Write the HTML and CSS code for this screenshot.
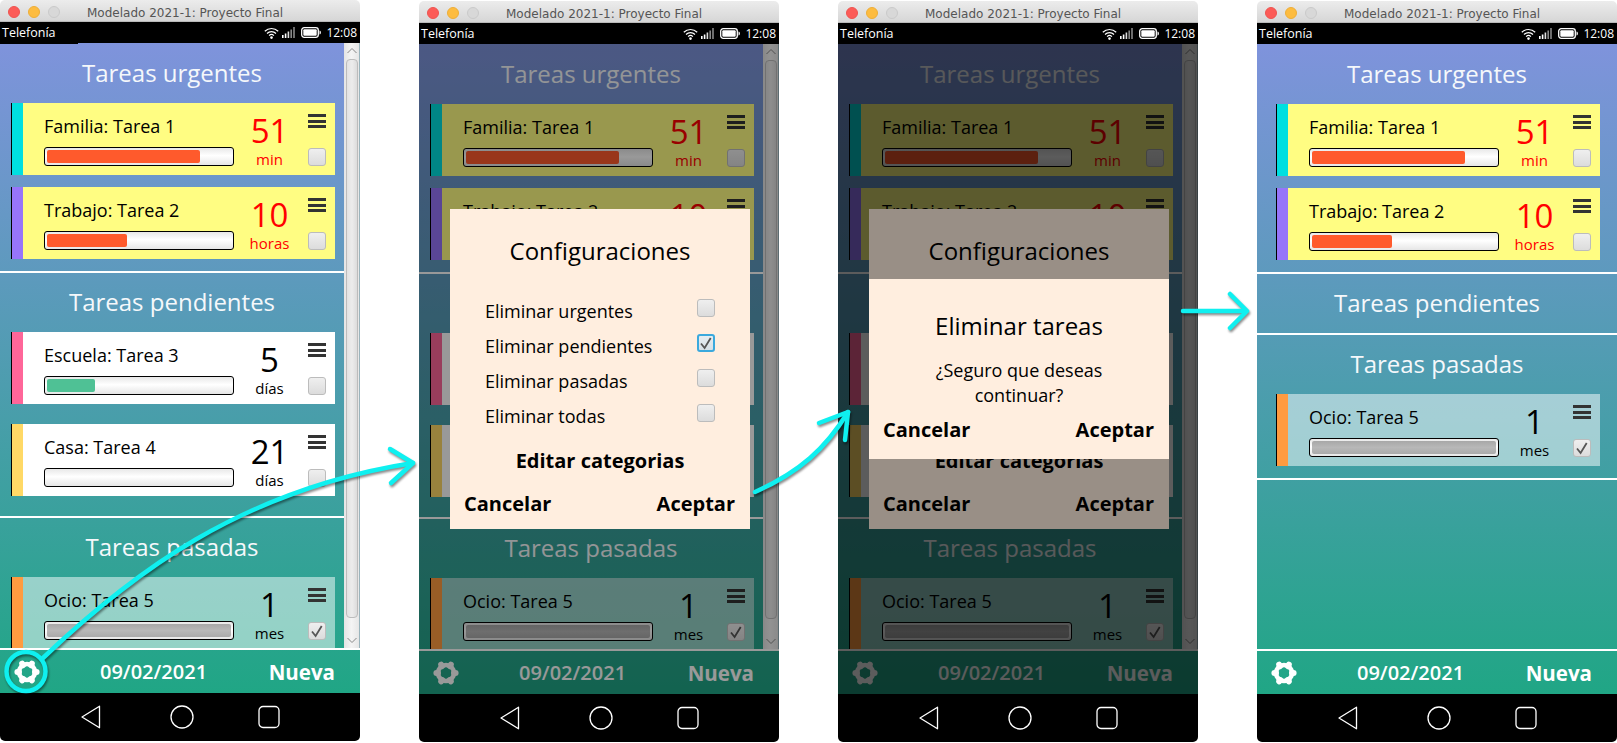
FILE: index.html
```html
<!DOCTYPE html>
<html lang="es">
<head>
<meta charset="utf-8">
<title>Modelado 2021-1: Proyecto Final</title>
<link rel="stylesheet" href="styles.css">
</head>
<body>
<svg class="defs" xmlns="http://www.w3.org/2000/svg">
  <symbol id="gear" viewBox="0 0 26 26">
    <circle cx="13" cy="13" r="8" fill="none" stroke="currentColor" stroke-width="4.5"/>
    <g stroke="currentColor" stroke-width="6" stroke-linecap="round">
      <path d="M21 13H22.600M17 6.070L17.800 4.690M9 6.070L8.200 4.690M5 13H3.400M9 19.930L8.200 21.310M17 19.930L17.800 21.310"/>
    </g>
  </symbol>
  <symbol id="wifi" viewBox="0 0 15 12">
    <g fill="none" stroke="#fff" stroke-width="1.2">
      <path d="M.8 4.2a9.6 9.6 0 0 1 13.4 0"/>
      <path d="M3 6.5a6.4 6.4 0 0 1 9 0"/>
      <path d="M5.1 8.6a3.4 3.4 0 0 1 4.8 0"/>
    </g>
    <circle cx="7.5" cy="10.6" r="1.3" fill="#fff"/>
  </symbol>
  <symbol id="signal" viewBox="0 0 13 11">
    <path fill="#fff" d="M0 8h1.6v3H0zM2.8 6.5h1.6V11H2.8z"/>
    <path fill="#ddd" d="M5.6 4.5h1.6V11H5.6z"/>
    <path fill="#888" d="M8.4 2.500H10V11H8.4zM11.2 0h1.6v11h-1.6z"/>
  </symbol>
  <symbol id="battery" viewBox="0 0 20 11">
    <rect x=".7" y=".7" width="16.6" height="9.6" rx="2.5" fill="none" stroke="#fff" stroke-width="1.3"/>
    <rect x="2.3" y="2.3" width="13.4" height="6.4" rx="1" fill="#fff"/>
    <path d="M18.5 3.500c1 .3 1.4 1 1.4 2s-.4 1.7-1.4 2z" fill="#fff"/>
  </symbol>
  <symbol id="tick" viewBox="0 0 18 18">
    <path d="M4 9.500l3.600 4.500L13.700 4" fill="none" stroke="#555" stroke-width="1.8"/>
  </symbol>
</svg>

<main class="desk">

  <section class="phone phone-first">
    <header class="titlebar"><span class="light light-red"></span><span class="light light-yellow"></span><span class="light light-gray"></span><span class="wintitle">Modelado 2021-1: Proyecto Final</span></header>
    <div class="status"><span class="carrier carrier-tab">Telefonía</span><svg class="ic-wifi"><use href="#wifi"/></svg><svg class="ic-signal"><use href="#signal"/></svg><svg class="ic-battery"><use href="#battery"/></svg><span class="clock">12:08</span></div>
    <div class="app">
      <div class="scroller">
        <div class="content">
          <div class="group group-urgent">
            <h2 class="group-title group-title-first">Tareas urgentes</h2>
            <div class="card card-urgent"><span class="stripe stripe-cyan"></span><div class="info"><div class="name">Familia: Tarea 1</div><div class="bar"><span class="fill fill-red" style="width:83%"></span></div></div><div class="count count-red"><div class="num">51</div><div class="unit">min</div></div><div class="actions"><span class="menu"><i></i><i></i><i></i></span><span class="check"></span></div></div>
            <div class="card card-urgent"><span class="stripe stripe-violet"></span><div class="info"><div class="name">Trabajo: Tarea 2</div><div class="bar"><span class="fill fill-red" style="width:43.5%"></span></div></div><div class="count count-red"><div class="num">10</div><div class="unit">horas</div></div><div class="actions"><span class="menu"><i></i><i></i><i></i></span><span class="check"></span></div></div>
          </div>
          <div class="group group-pending">
            <h2 class="group-title">Tareas pendientes</h2>
            <div class="card"><span class="stripe stripe-pink"></span><div class="info"><div class="name">Escuela: Tarea 3</div><div class="bar"><span class="fill fill-green" style="width:26%"></span></div></div><div class="count"><div class="num">5</div><div class="unit">días</div></div><div class="actions"><span class="menu"><i></i><i></i><i></i></span><span class="check"></span></div></div>
            <div class="card"><span class="stripe stripe-gold"></span><div class="info"><div class="name">Casa: Tarea 4</div><div class="bar"></div></div><div class="count"><div class="num">21</div><div class="unit">días</div></div><div class="actions"><span class="menu"><i></i><i></i><i></i></span><span class="check"></span></div></div>
          </div>
          <div class="group group-past">
            <h2 class="group-title">Tareas pasadas</h2>
            <div class="card card-done"><span class="stripe stripe-orange"></span><div class="info"><div class="name">Ocio: Tarea 5</div><div class="bar"><span class="fill fill-gray" style="width:100%"></span></div></div><div class="count"><div class="num">1</div><div class="unit">mes</div></div><div class="actions"><span class="menu"><i></i><i></i><i></i></span><span class="check"><svg class="tick"><use href="#tick"/></svg></span></div></div>
          </div>
        </div>
        <div class="scrollbar"><svg class="chev" viewBox="0 0 16 16"><path d="M3.5 10L8 5.5l4.5 4.5"/></svg><span class="thumb"></span><svg class="chev chev-end" viewBox="0 0 16 16"><path d="M3.5 6L8 10.5 12.5 6"/></svg></div>
      </div>
      <footer class="toolbar"><svg class="gear"><use href="#gear"/></svg><span class="date">09/02/2021</span><span class="new">Nueva</span></footer>
    </div>
    <nav class="navbar"><svg class="nav-back" viewBox="0 0 20 24"><path d="M1 12L18.5 1.2v21.6z"/></svg><svg class="nav-home" viewBox="0 0 24 24"><circle cx="12" cy="12" r="11"/></svg><svg class="nav-recent" viewBox="0 0 22 24"><rect x="1" y="1.5" width="20" height="21" rx="4"/></svg></nav>
  </section>

  <section class="phone">
    <header class="titlebar"><span class="light light-red"></span><span class="light light-yellow"></span><span class="light light-gray"></span><span class="wintitle">Modelado 2021-1: Proyecto Final</span></header>
    <div class="status"><span class="carrier">Telefonía</span><svg class="ic-wifi"><use href="#wifi"/></svg><svg class="ic-signal"><use href="#signal"/></svg><svg class="ic-battery"><use href="#battery"/></svg><span class="clock">12:08</span></div>
    <div class="app">
      <div class="scroller">
        <div class="content">
          <div class="group group-urgent">
            <h2 class="group-title group-title-first">Tareas urgentes</h2>
            <div class="card card-urgent"><span class="stripe stripe-cyan"></span><div class="info"><div class="name">Familia: Tarea 1</div><div class="bar"><span class="fill fill-red" style="width:83%"></span></div></div><div class="count count-red"><div class="num">51</div><div class="unit">min</div></div><div class="actions"><span class="menu"><i></i><i></i><i></i></span><span class="check"></span></div></div>
            <div class="card card-urgent"><span class="stripe stripe-violet"></span><div class="info"><div class="name">Trabajo: Tarea 2</div><div class="bar"><span class="fill fill-red" style="width:43.5%"></span></div></div><div class="count count-red"><div class="num">10</div><div class="unit">horas</div></div><div class="actions"><span class="menu"><i></i><i></i><i></i></span><span class="check"></span></div></div>
          </div>
          <div class="group group-pending">
            <h2 class="group-title">Tareas pendientes</h2>
            <div class="card"><span class="stripe stripe-pink"></span><div class="info"><div class="name">Escuela: Tarea 3</div><div class="bar"><span class="fill fill-green" style="width:26%"></span></div></div><div class="count"><div class="num">5</div><div class="unit">días</div></div><div class="actions"><span class="menu"><i></i><i></i><i></i></span><span class="check"></span></div></div>
            <div class="card"><span class="stripe stripe-gold"></span><div class="info"><div class="name">Casa: Tarea 4</div><div class="bar"></div></div><div class="count"><div class="num">21</div><div class="unit">días</div></div><div class="actions"><span class="menu"><i></i><i></i><i></i></span><span class="check"></span></div></div>
          </div>
          <div class="group group-past">
            <h2 class="group-title">Tareas pasadas</h2>
            <div class="card card-done"><span class="stripe stripe-orange"></span><div class="info"><div class="name">Ocio: Tarea 5</div><div class="bar"><span class="fill fill-gray" style="width:100%"></span></div></div><div class="count"><div class="num">1</div><div class="unit">mes</div></div><div class="actions"><span class="menu"><i></i><i></i><i></i></span><span class="check"><svg class="tick"><use href="#tick"/></svg></span></div></div>
          </div>
        </div>
        <div class="scrollbar"><svg class="chev" viewBox="0 0 16 16"><path d="M3.5 10L8 5.5l4.5 4.5"/></svg><span class="thumb"></span><svg class="chev chev-end" viewBox="0 0 16 16"><path d="M3.5 6L8 10.5 12.5 6"/></svg></div>
      </div>
      <footer class="toolbar"><svg class="gear"><use href="#gear"/></svg><span class="date">09/02/2021</span><span class="new">Nueva</span></footer>
      <div class="overlay">
        <div class="dialog">
          <h3 class="dialog-title">Configuraciones</h3>
          <div class="option"><span class="option-label">Eliminar urgentes</span><span class="check"></span></div>
          <div class="option"><span class="option-label">Eliminar pendientes</span><span class="check check-focus"><svg class="tick"><use href="#tick"/></svg></span></div>
          <div class="option"><span class="option-label">Eliminar pasadas</span><span class="check"></span></div>
          <div class="option"><span class="option-label">Eliminar todas</span><span class="check"></span></div>
          <div class="dialog-link">Editar categorias</div>
          <div class="dialog-buttons"><span>Cancelar</span><span>Aceptar</span></div>
        </div>
      </div>
    </div>
    <nav class="navbar"><svg class="nav-back" viewBox="0 0 20 24"><path d="M1 12L18.5 1.2v21.6z"/></svg><svg class="nav-home" viewBox="0 0 24 24"><circle cx="12" cy="12" r="11"/></svg><svg class="nav-recent" viewBox="0 0 22 24"><rect x="1" y="1.5" width="20" height="21" rx="4"/></svg></nav>
  </section>

  <section class="phone">
    <header class="titlebar"><span class="light light-red"></span><span class="light light-yellow"></span><span class="light light-gray"></span><span class="wintitle">Modelado 2021-1: Proyecto Final</span></header>
    <div class="status"><span class="carrier">Telefonía</span><svg class="ic-wifi"><use href="#wifi"/></svg><svg class="ic-signal"><use href="#signal"/></svg><svg class="ic-battery"><use href="#battery"/></svg><span class="clock">12:08</span></div>
    <div class="app">
      <div class="scroller">
        <div class="content">
          <div class="group group-urgent">
            <h2 class="group-title group-title-first">Tareas urgentes</h2>
            <div class="card card-urgent"><span class="stripe stripe-cyan"></span><div class="info"><div class="name">Familia: Tarea 1</div><div class="bar"><span class="fill fill-red" style="width:83%"></span></div></div><div class="count count-red"><div class="num">51</div><div class="unit">min</div></div><div class="actions"><span class="menu"><i></i><i></i><i></i></span><span class="check"></span></div></div>
            <div class="card card-urgent"><span class="stripe stripe-violet"></span><div class="info"><div class="name">Trabajo: Tarea 2</div><div class="bar"><span class="fill fill-red" style="width:43.5%"></span></div></div><div class="count count-red"><div class="num">10</div><div class="unit">horas</div></div><div class="actions"><span class="menu"><i></i><i></i><i></i></span><span class="check"></span></div></div>
          </div>
          <div class="group group-pending">
            <h2 class="group-title">Tareas pendientes</h2>
            <div class="card"><span class="stripe stripe-pink"></span><div class="info"><div class="name">Escuela: Tarea 3</div><div class="bar"><span class="fill fill-green" style="width:26%"></span></div></div><div class="count"><div class="num">5</div><div class="unit">días</div></div><div class="actions"><span class="menu"><i></i><i></i><i></i></span><span class="check"></span></div></div>
            <div class="card"><span class="stripe stripe-gold"></span><div class="info"><div class="name">Casa: Tarea 4</div><div class="bar"></div></div><div class="count"><div class="num">21</div><div class="unit">días</div></div><div class="actions"><span class="menu"><i></i><i></i><i></i></span><span class="check"></span></div></div>
          </div>
          <div class="group group-past">
            <h2 class="group-title">Tareas pasadas</h2>
            <div class="card card-done"><span class="stripe stripe-orange"></span><div class="info"><div class="name">Ocio: Tarea 5</div><div class="bar"><span class="fill fill-gray" style="width:100%"></span></div></div><div class="count"><div class="num">1</div><div class="unit">mes</div></div><div class="actions"><span class="menu"><i></i><i></i><i></i></span><span class="check"><svg class="tick"><use href="#tick"/></svg></span></div></div>
          </div>
        </div>
        <div class="scrollbar"><svg class="chev" viewBox="0 0 16 16"><path d="M3.5 10L8 5.5l4.5 4.5"/></svg><span class="thumb"></span><svg class="chev chev-end" viewBox="0 0 16 16"><path d="M3.5 6L8 10.5 12.5 6"/></svg></div>
      </div>
      <footer class="toolbar"><svg class="gear"><use href="#gear"/></svg><span class="date">09/02/2021</span><span class="new">Nueva</span></footer>
      <div class="overlay">
        <div class="dialog">
          <h3 class="dialog-title">Configuraciones</h3>
          <div class="option"><span class="option-label">Eliminar urgentes</span><span class="check"></span></div>
          <div class="option"><span class="option-label">Eliminar pendientes</span><span class="check check-focus"><svg class="tick"><use href="#tick"/></svg></span></div>
          <div class="option"><span class="option-label">Eliminar pasadas</span><span class="check"></span></div>
          <div class="option"><span class="option-label">Eliminar todas</span><span class="check"></span></div>
          <div class="dialog-link">Editar categorias</div>
          <div class="dialog-buttons"><span>Cancelar</span><span>Aceptar</span></div>
        </div>
        <div class="overlay">
          <div class="dialog dialog-confirm">
            <h3 class="dialog-title">Eliminar tareas</h3>
            <p class="confirm-text">¿Seguro que deseas<br>continuar?</p>
            <div class="dialog-buttons confirm-buttons"><span>Cancelar</span><span>Aceptar</span></div>
          </div>
        </div>
      </div>
    </div>
    <nav class="navbar"><svg class="nav-back" viewBox="0 0 20 24"><path d="M1 12L18.5 1.2v21.6z"/></svg><svg class="nav-home" viewBox="0 0 24 24"><circle cx="12" cy="12" r="11"/></svg><svg class="nav-recent" viewBox="0 0 22 24"><rect x="1" y="1.5" width="20" height="21" rx="4"/></svg></nav>
  </section>

  <section class="phone phone-final">
    <header class="titlebar"><span class="light light-red"></span><span class="light light-yellow"></span><span class="light light-gray"></span><span class="wintitle">Modelado 2021-1: Proyecto Final</span></header>
    <div class="status"><span class="carrier">Telefonía</span><svg class="ic-wifi"><use href="#wifi"/></svg><svg class="ic-signal"><use href="#signal"/></svg><svg class="ic-battery"><use href="#battery"/></svg><span class="clock">12:08</span></div>
    <div class="app">
      <div class="scroller">
        <div class="content">
          <div class="group group-urgent">
            <h2 class="group-title group-title-first">Tareas urgentes</h2>
            <div class="card card-urgent"><span class="stripe stripe-cyan"></span><div class="info"><div class="name">Familia: Tarea 1</div><div class="bar"><span class="fill fill-red" style="width:83%"></span></div></div><div class="count count-red"><div class="num">51</div><div class="unit">min</div></div><div class="actions"><span class="menu"><i></i><i></i><i></i></span><span class="check"></span></div></div>
            <div class="card card-urgent"><span class="stripe stripe-violet"></span><div class="info"><div class="name">Trabajo: Tarea 2</div><div class="bar"><span class="fill fill-red" style="width:43.5%"></span></div></div><div class="count count-red"><div class="num">10</div><div class="unit">horas</div></div><div class="actions"><span class="menu"><i></i><i></i><i></i></span><span class="check"></span></div></div>
          </div>
          <div class="group group-collapsed">
            <h2 class="group-title">Tareas pendientes</h2>
          </div>
          <div class="group group-past">
            <h2 class="group-title">Tareas pasadas</h2>
            <div class="card card-done"><span class="stripe stripe-orange"></span><div class="info"><div class="name">Ocio: Tarea 5</div><div class="bar"><span class="fill fill-gray" style="width:100%"></span></div></div><div class="count"><div class="num">1</div><div class="unit">mes</div></div><div class="actions"><span class="menu"><i></i><i></i><i></i></span><span class="check"><svg class="tick"><use href="#tick"/></svg></span></div></div>
          </div>
        </div>
      </div>
      <footer class="toolbar"><svg class="gear"><use href="#gear"/></svg><span class="date">09/02/2021</span><span class="new">Nueva</span></footer>
    </div>
    <nav class="navbar"><svg class="nav-back" viewBox="0 0 20 24"><path d="M1 12L18.5 1.2v21.6z"/></svg><svg class="nav-home" viewBox="0 0 24 24"><circle cx="12" cy="12" r="11"/></svg><svg class="nav-recent" viewBox="0 0 22 24"><rect x="1" y="1.5" width="20" height="21" rx="4"/></svg></nav>
  </section>

</main>

<svg class="arrows" viewBox="0 0 1617 743" xmlns="http://www.w3.org/2000/svg">
  <g fill="none" stroke="#0ff0f0" stroke-width="4.5" stroke-linecap="round" stroke-linejoin="round">
    <circle cx="26" cy="671.5" r="19.5"/>
    <path d="M43 658C130 575 240 490 413 463"/>
    <path d="M390 449L413 463L391 483"/>
    <path d="M755 492C800 472 826 448 848 412"/>
    <path d="M819 423L848 412L845 440"/>
    <path d="M1183 311H1246"/>
    <path d="M1230 294L1247 311L1230 328"/>
  </g>
</svg>
</body>
</html>
```
FILE: styles.css
```css
* { box-sizing: border-box; }

html, body {
  margin: 0;
  padding: 0;
  background: #fff;
}

body {
  position: relative;
  width: 1617px;
  height: 743px;
  overflow: hidden;
  font-family: "Open Sans", "Noto Sans", sans-serif;
  color: #000;
}

.defs { display: none; }

.desk {
  display: flex;
  align-items: flex-start;
  gap: 59px;
}

.phone {
  width: 360px;
  height: 741px;
  margin-top: 1px;
  display: flex;
  flex-direction: column;
  flex: none;
}

.phone-first { margin-top: 0; }

/* window chrome */
.titlebar {
  height: 22px;
  flex: none;
  display: flex;
  align-items: center;
  padding-left: 8px;
  gap: 8px;
  background: linear-gradient(#ececec, #d6d6d6);
  border-radius: 5px 5px 0 0;
  border-bottom: 1px solid #b9b9b9;
}

.light {
  width: 12px;
  height: 12px;
  margin-top: 2px;
  border-radius: 50%;
  flex: none;
}
.light-red { background: #fc5b57; border: 1px solid #ee5450; }
.light-yellow { background: #fdbc40; border: 1px solid #eeae38; }
.light-gray { background: #d8d8d8; border: 1px solid #cacaca; }

.wintitle {
  margin: 4px 0 0 19px;
  font-family: "DejaVu Sans", sans-serif;
  font-size: 12px;
  color: #555;
  white-space: nowrap;
}

.status {
  height: 21px;
  flex: none;
  display: flex;
  align-items: center;
  background: #000;
  color: #fff;
  position: relative;
  z-index: 1;
}

.carrier {
  font-size: 12.5px;
  line-height: 21px;
  padding-left: 2px;
  margin-right: auto;
  width: 78px;
  height: 21px;
  background: #000;
}
.carrier-tab { height: 22px; align-self: flex-start; }

.ic-wifi { width: 15px; height: 12px; }
.ic-signal { width: 13px; height: 11px; margin-left: 3px; }
.ic-battery { width: 20px; height: 11px; margin-left: 6px; }
.clock {
  font-size: 12px;
  line-height: 21px;
  margin-left: 5px;
  padding-right: 3px;
}

/* app */
.app {
  position: relative;
  height: 650px;
  flex: none;
  display: flex;
  flex-direction: column;
  background: linear-gradient(#7f93dc, #20a685);
}

.scroller {
  height: 605px;
  flex: none;
  display: flex;
  overflow: hidden;
}

.content {
  flex: 1;
  min-width: 0;
}

.group { border-bottom: 2px solid #fff; }
.group-urgent .card { margin-bottom: 12px; }
.group-pending .card { margin-bottom: 20px; }
.group-past .card { margin-bottom: 12px; }

.group-title {
  margin: 0;
  height: 59px;
  font-size: 24px;
  font-weight: 400;
  line-height: 57px;
  text-align: center;
  color: #f5f8fb;
}
.group-title-first {
  height: 60px;
  line-height: 60px;
}

/* card */
.card {
  display: flex;
  width: 324px;
  height: 72px;
  margin-left: 11px;
  background: #fff;
}
.card-urgent { background: #fffd82; }
.card-done { background: rgba(255, 255, 255, 0.5); }

.phone-final .card { margin-left: 19px; }

.stripe {
  width: 12px;
  flex: none;
  border-left: 1px solid #000;
}
.stripe-cyan { background: #00dfe0; }
.stripe-violet { background: #9775fa; }
.stripe-pink { background: #ff6699; }
.stripe-gold { background: #ffd966; }
.stripe-orange { background: #ff9b40; }

.info {
  width: 190px;
  margin-left: 21px;
  flex: none;
}

.name {
  margin-top: 11px;
  font-size: 18px;
  line-height: 24px;
  white-space: nowrap;
}

.bar {
  height: 19px;
  margin-top: 9px;
  padding: 2px;
  border: 1px solid #000;
  border-radius: 3px;
  background: linear-gradient(#e8e8e8, #fff 45%, #e6e6e6);
}

.fill {
  display: block;
  height: 100%;
  border-radius: 2px;
}
.fill-red { background: #ff5a2c; }
.fill-green { background: #4fc195; }
.fill-gray { background: linear-gradient(#a8a8a8, #b8b8b8 50%, #aaa); }

.count {
  width: 71px;
  flex: none;
  text-align: center;
}
.count-red { color: #f00; }

.num {
  margin-top: 8px;
  font-size: 33px;
  line-height: 40px;
}
.unit {
  font-size: 15px;
  line-height: 20px;
  margin-top: -2px;
}

.actions {
  width: 18px;
  margin-left: 3px;
  flex: none;
  display: flex;
  flex-direction: column;
  padding-top: 11px;
}

.menu {
  display: flex;
  flex-direction: column;
  gap: 2.5px;
  height: 14px;
  margin-bottom: 20px;
}
.menu i {
  display: block;
  height: 3px;
  background: #333;
}

.check {
  display: block;
  width: 18px;
  height: 18px;
  border: 1px solid #bcbcbc;
  border-radius: 3px;
  background: linear-gradient(#efefef, #dcdcdc);
  flex: none;
  position: relative;
}
.check-focus {
  border: 2px solid #3ba9dd;
  background: linear-gradient(#e6edf1, #d6e0e6);
}
.tick {
  display: block;
  width: 18px;
  height: 18px;
  margin: -1px;
}
.check-focus .tick { margin: -2px; }

/* scrollbar */
.scrollbar {
  width: 16px;
  flex: none;
  display: flex;
  flex-direction: column;
  align-items: center;
  background: linear-gradient(90deg, #e4e4e4, #f4f4f4 50%, #e6e6e6);
  border-right: 1px solid #9ab4bc;
}
.chev {
  width: 16px;
  height: 16px;
  flex: none;
  fill: none;
  stroke: #888;
  stroke-width: 1;
}
.chev-end { margin-top: auto; }
.thumb {
  width: 12px;
  height: 559px;
  flex: none;
  border: 1px solid #bcbcbc;
  border-radius: 4px;
  background: linear-gradient(90deg, #e2e2e2, #ececec 50%, #dcdcdc);
}

/* bottom toolbar */
.toolbar {
  height: 45px;
  flex: none;
  display: flex;
  align-items: center;
  border-top: 2px solid #fff;
  color: #fff;
}
.gear {
  width: 26px;
  height: 26px;
  margin-left: 14px;
  flex: none;
  color: #fff;
}
.date {
  margin-left: 60px;
  font-size: 20px;
  font-weight: 600;
  white-space: nowrap;
}
.new {
  margin-left: auto;
  padding-right: 25px;
  font-size: 20.5px;
  font-weight: 700;
}

/* android nav */
.navbar {
  height: 48px;
  flex: none;
  display: flex;
  align-items: center;
  padding-left: 81px;
  background: #000;
  border-radius: 0 0 5px 5px;
}
.navbar svg { fill: none; stroke: #fff; stroke-width: 1.3; flex: none; height: 24px; }
.nav-back { width: 20px; stroke-linejoin: round; }
.nav-home { width: 24px; margin-left: 69px; }
.nav-recent { width: 22px; margin-left: 64px; stroke: #c4c4c4; }

/* modal layers */
.overlay {
  position: absolute;
  inset: 0;
  display: flex;
  align-items: center;
  justify-content: center;
  padding-left: 2px;
  background: rgba(0, 0, 0, 0.4);
}

.dialog {
  width: 300px;
  height: 320px;
  flex: none;
  background: #ffeedf;
  display: flex;
  flex-direction: column;
  padding-top: 26px;
}

.dialog-title {
  margin: 0;
  font-size: 24px;
  font-weight: 400;
  line-height: 32px;
  text-align: center;
}

.option {
  display: flex;
  justify-content: space-between;
  height: 35px;
  padding: 0 35px 0 35px;
}
.dialog-title + .option { margin-top: 32px; }

.option-label {
  font-size: 18px;
  line-height: 24px;
}

.dialog-link {
  margin-top: 8px;
  font-size: 20px;
  font-weight: 700;
  line-height: 28px;
  text-align: center;
}

.dialog-buttons {
  display: flex;
  justify-content: space-between;
  padding: 0 15px 0 14px;
  margin-top: 15px;
  font-size: 20px;
  font-weight: 700;
  line-height: 28px;
}

.dialog-confirm {
  height: 180px;
  padding-top: 31px;
}
.confirm-text {
  margin: 16px 0 0;
  font-size: 18px;
  line-height: 25px;
  text-align: center;
}
.confirm-buttons { margin-top: 8px; }

/* annotation arrows */
.arrows {
  position: absolute;
  top: 0;
  left: 0;
  width: 1617px;
  height: 743px;
  pointer-events: none;
  filter: drop-shadow(1px 2px 1px rgba(0, 0, 0, 0.45));
}
```
